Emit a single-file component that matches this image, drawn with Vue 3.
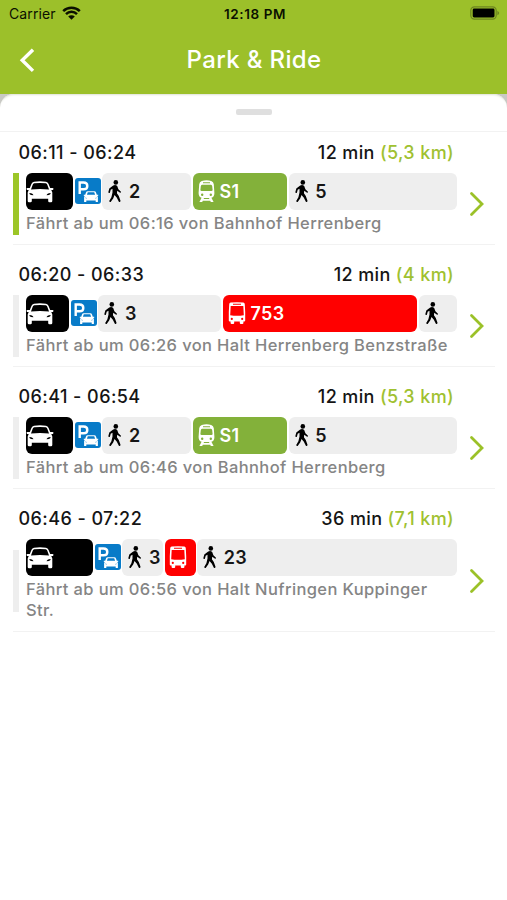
<script setup>
const WALK = { kind: 'walk' }
const trips = [
  {
    time: '06:11 - 06:24', duration: '12 min', distance: '(5,3 km)', active: true,
    note: 'Fährt ab um 06:16 von Bahnhof Herrenberg',
    legs: [
      { kind: 'car', width: 47 }, { kind: 'parking', width: 26 },
      { ...WALK, width: 89, label: '2' }, { kind: 'train', width: 94, label: 'S1' },
      { ...WALK, width: 168, label: '5' }
    ]
  },
  {
    time: '06:20 - 06:33', duration: '12 min', distance: '(4 km)',
    note: 'Fährt ab um 06:26 von Halt Herrenberg Benzstraße',
    legs: [
      { kind: 'car', width: 43 }, { kind: 'parking', width: 26 },
      { ...WALK, width: 123, label: '3' }, { kind: 'bus', width: 194, label: '753' },
      { ...WALK, width: 38 }
    ]
  },
  {
    time: '06:41 - 06:54', duration: '12 min', distance: '(5,3 km)',
    note: 'Fährt ab um 06:46 von Bahnhof Herrenberg',
    legs: [
      { kind: 'car', width: 47 }, { kind: 'parking', width: 26 },
      { ...WALK, width: 89, label: '2' }, { kind: 'train', width: 94, label: 'S1' },
      { ...WALK, width: 168, label: '5' }
    ]
  },
  {
    time: '06:46 - 07:22', duration: '36 min', distance: '(7,1 km)',
    note: 'Fährt ab um 06:56 von Halt Nufringen Kuppinger Str.',
    legs: [
      { kind: 'car', width: 67 }, { kind: 'parking', width: 26 },
      { ...WALK, width: 40.5, label: '3' }, { kind: 'bus', width: 31 },
      { ...WALK, width: 259.5, label: '23' }
    ]
  }
]
</script>

<template>
  <div class="screen">
    <header class="top">
      <div class="status">
        <div class="carrier">
          <span>Carrier</span>
          <svg width="19" height="14" viewBox="0 0 19 14">
            <path d="M1.2 5.2a11.8 11.8 0 0 1 16.6 0M4 8.1a7.8 7.8 0 0 1 11 0" fill="none" stroke="#0b1000" stroke-width="2.5" />
            <path d="M6.2 10.5a4.7 4.7 0 0 1 6.6 0L9.5 13.8z" fill="#0b1000" />
          </svg>
        </div>
        <span class="clock">12:18 PM</span>
        <svg class="battery" width="31" height="14" viewBox="0 0 31 14">
          <rect x="1.8" y=".8" width="25.4" height="12.4" rx="3.6" fill="none" stroke="#6d8520" stroke-width="1.2" />
          <rect x="3.7" y="2.6" width="21.8" height="8.8" rx="1.4" fill="#000" />
          <path d="M28.4 4.7q3.6 2.3 0 4.6z" fill="#6d8520" />
        </svg>
      </div>
      <div class="nav">
        <svg class="back" width="17" height="25" viewBox="0 0 17 25"><path d="M14 1.7 3.2 12.3 14 22.9" fill="none" stroke="#fff" stroke-width="3.4" /></svg>
        <h1>Park &amp; Ride</h1>
      </div>
    </header>

    <div class="backdrop">
      <main class="sheet">
        <div class="grip"><i></i></div>
        <section v-for="trip in trips" :key="trip.time" class="trip">
          <div class="head">
            <span class="time">{{ trip.time }}</span>
            <span class="length">{{ trip.duration }} <em>{{ trip.distance }}</em></span>
          </div>
          <div class="body">
            <span class="marker" :class="{ active: trip.active }"></span>
            <div class="route">
              <div class="legs">
                <div v-for="(leg, i) in trip.legs" :key="i" class="leg" :class="leg.kind" :style="{ width: leg.width + 'px' }">
                  <svg v-if="leg.kind === 'car'" width="28" height="22" viewBox="0 0 28 22">
                    <path fill="#fff" fill-rule="evenodd" d="M8 .8Q14 -.2 20 .8Q21.8 1.2 22.6 3L24.2 7H26.5Q27.8 7 27.4 8.2Q27 9.3 25.3 9L26.3 11.4V20Q26.3 21.2 25 21.2H23.4Q22.2 21.2 22.2 20V17.8H5.8V20Q5.8 21.2 4.6 21.2H3Q1.7 21.2 1.7 20V11.4L2.7 9Q1 9.3.6 8.2Q.2 7 1.5 7H3.8L5.4 3Q6.2 1.2 8 .8ZM8.2 2.3Q7.2 2.5 6.7 3.8L5 8.5Q14 7.5 23 8.5L21.3 3.8Q20.8 2.5 19.8 2.3Q14 1.5 8.2 2.3ZM3.4 12Q3.2 13.7 5 13.9L7.4 14.2Q7.2 12.6 3.4 12ZM24.6 12Q20.8 12.6 20.6 14.2L23 13.9Q24.8 13.7 24.6 12Z" />
                  </svg>
                  <svg v-else-if="leg.kind === 'parking'" width="26" height="26" viewBox="0 0 26 26">
                    <rect width="26" height="26" rx="3" fill="#087bc8" />
                    <path d="M4.7 16V4.5h3.8q3.8 0 3.8 3.4t-3.8 3.4H4.7" fill="none" stroke="#fff" stroke-width="2.4" />
                    <path fill="#fff" fill-rule="evenodd" d="M12.6 13.2h6.8q1.2 0 1.6 1.2l.8 2.3h1.4v1.1l-.9.2.6 1.2v4.8h-2.2v-1.4h-9.4v1.4H9.1v-4.8l.6-1.2-.9-.2v-1.1h1.4l.8-2.3q.4-1.2 1.6-1.2Zm.2 1.1-.9 2.5h8.2l-.9-2.5ZM10.6 19.2v1l1.4.3zM21.4 19.2v1l-1.4.3z" />
                  </svg>
                  <svg v-else-if="leg.kind === 'walk'" width="14" height="23" viewBox="0 0 14 23">
                    <circle cx="7.8" cy="2.4" r="2.3" />
                    <path d="M5.2 5.5Q7.5 4.5 9.2 6L10.4 9.3 12.8 11.5Q13.4 12.7 12.1 12.8L9.2 10.8 8.9 13.3 10.8 16.1 12.5 20.7Q12.5 22.2 11 21.9L8.7 17.5 6.5 15 5.3 18.3 2.7 21.9Q1.4 22.2 1.2 20.9L3.4 17.3 4.5 12.5V8.7L2.7 9.8 1.9 12.7Q.7 13.5.3 12.2L1.3 8.5Z" />
                  </svg>
                  <svg v-else-if="leg.kind === 'train'" width="17" height="23" viewBox="0 0 17 23">
                    <path fill="#fff" fill-rule="evenodd" d="M3.8 1Q8.5-.3 13.2 1Q15.5 1.7 15.8 4.2L16.4 13Q16.4 17 13.4 17.8L15.6 22H12.8L12.2 20.8H4.8L4.2 22H1.4L3.6 17.8Q.6 17 .6 13L1.2 4.2Q1.5 1.7 3.8 1ZM5 2.2V3.2H12V2.2ZM4 4.8Q3 5 2.8 6.2L2.4 10Q2.4 11 3.6 11H13.4Q14.6 11 14.6 10L14.2 6.2Q14 5 13 4.8ZM4.2 13.5A1.2 1.2 0 1 0 4.2 15.9A1.2 1.2 0 1 0 4.2 13.5ZM12.8 13.5A1.2 1.2 0 1 0 12.8 15.9A1.2 1.2 0 1 0 12.8 13.5ZM6 18.1 5.6 19.1H11.4L11 18.1Z" />
                  </svg>
                  <svg v-else width="18" height="23" viewBox="0 0 18 23">
                    <path fill="#fff" fill-rule="evenodd" d="M2.8.6Q9 0 15.2.6Q16.8.8 16.8 2.6L17.2 10V18.5Q17.2 19.5 16.2 19.5H15.4V21Q15.4 22 14.4 22H12.8Q11.8 22 11.8 21V19.5H6.2V21Q6.2 22 5.2 22H3.6Q2.6 22 2.6 21V19.5H1.8Q.8 19.5.8 18.5V10L1.2 2.6Q1.2.8 2.8.6ZM5 1.7V2.7H13V1.7ZM2.7 4 2.2 13.2Q9 14.2 15.8 13.2L15.3 4ZM3.8 15.8A1.1 1.1 0 1 0 3.8 18A1.1 1.1 0 1 0 3.8 15.8ZM14.2 15.8A1.1 1.1 0 1 0 14.2 18A1.1 1.1 0 1 0 14.2 15.8Z" />
                  </svg>
                  <b v-if="leg.label">{{ leg.label }}</b>
                </div>
              </div>
              <p>{{ trip.note }}</p>
            </div>
            <svg class="go" width="16" height="26" viewBox="0 0 16 26"><path d="M2.5 2.5 13 13 2.5 23.5" fill="none" stroke="#9bc128" stroke-width="2.8" stroke-linecap="round" /></svg>
          </div>
        </section>
      </main>
    </div>
  </div>
</template>

<style>
body { margin: 0; background: #fff; }
</style>

<style scoped>
.screen { width: 507px; height: 900px; overflow: hidden; background: #fff; font-family: Inter, "Liberation Sans", sans-serif; color: #151515; }
svg { display: block; flex: none; }
.top { height: 94px; background: #9cc02a; }
.status { height: 28px; display: grid; grid-template-columns: 1fr auto 1fr; align-items: center; padding: 0 7px 1px 9px; box-sizing: border-box; color: #0b1000; font-size: 14px; }
.carrier { display: flex; align-items: center; gap: 6px; letter-spacing: .1px; }
.carrier svg { margin-top: -2px; }
.clock { margin-left: 1px; font-size: 13.5px; font-weight: 600; letter-spacing: .6px; }
.battery { justify-self: end; margin-top: -1px; }
.nav { height: 64px; display: grid; grid-template-columns: 60px 1fr 60px; align-items: center; }
.back { margin-left: 19px; }
h1 { margin: 0 0 0 1px; text-align: center; color: #fff; font-size: 24px; line-height: 30px; font-weight: 500; letter-spacing: .35px; }
.backdrop { background: #c9c9c5; }
.sheet { height: 806px; background: #fff; border-radius: 14px 14px 0 0; box-shadow: inset 0 3px 2px -2px #dfe3d5; }
.grip { height: 38px; box-sizing: border-box; padding-top: 15px; border-bottom: 1px solid #f2f2f2; }
.grip i { display: block; width: 36px; height: 6px; margin: 0 auto; border-radius: 2px; background: #dfdfdf; }
.trip { margin: 0 12px 0 13px; padding: 17px 0 9.1px; border-bottom: 1px solid #f2f2f2; }
.trip:nth-child(2) { padding-top: 8px; }
.head { height: 24px; margin-bottom: 9px; padding: 0 41px 0 5.5px; display: flex; justify-content: space-between; align-items: center; font-size: 18px; font-weight: 500; letter-spacing: .43px; }
.length { letter-spacing: .37px; }
em { font-style: normal; color: #9fc131; }
.body { display: flex; align-items: center; }
.marker { width: 6px; height: 62px; background: #eee; }
.marker.active { background: #9cc628; }
.route { width: 432px; margin-left: 7px; }
.legs { display: flex; gap: 1.7px; height: 37px; }
.leg { flex: none; box-sizing: border-box; border-radius: 6px; display: flex; align-items: center; overflow: hidden; }
.car { background: #000; }
.parking { padding-bottom: 2px; }
.walk { background: #eee; padding-left: 6px; gap: 6.5px; }
.train { background: #83b13a; padding-left: 4.5px; gap: 5px; color: #fff; }
.bus { background: #f00; padding-left: 4.5px; gap: 5px; color: #fff; }
b { font-size: 18px; font-weight: 600; letter-spacing: .3px; }
p { margin: 3px 0 1px; width: 425px; color: #858585; font-size: 16.5px; line-height: 21px; font-weight: 500; letter-spacing: .38px; }
.go { margin-left: 11px; }
</style>
